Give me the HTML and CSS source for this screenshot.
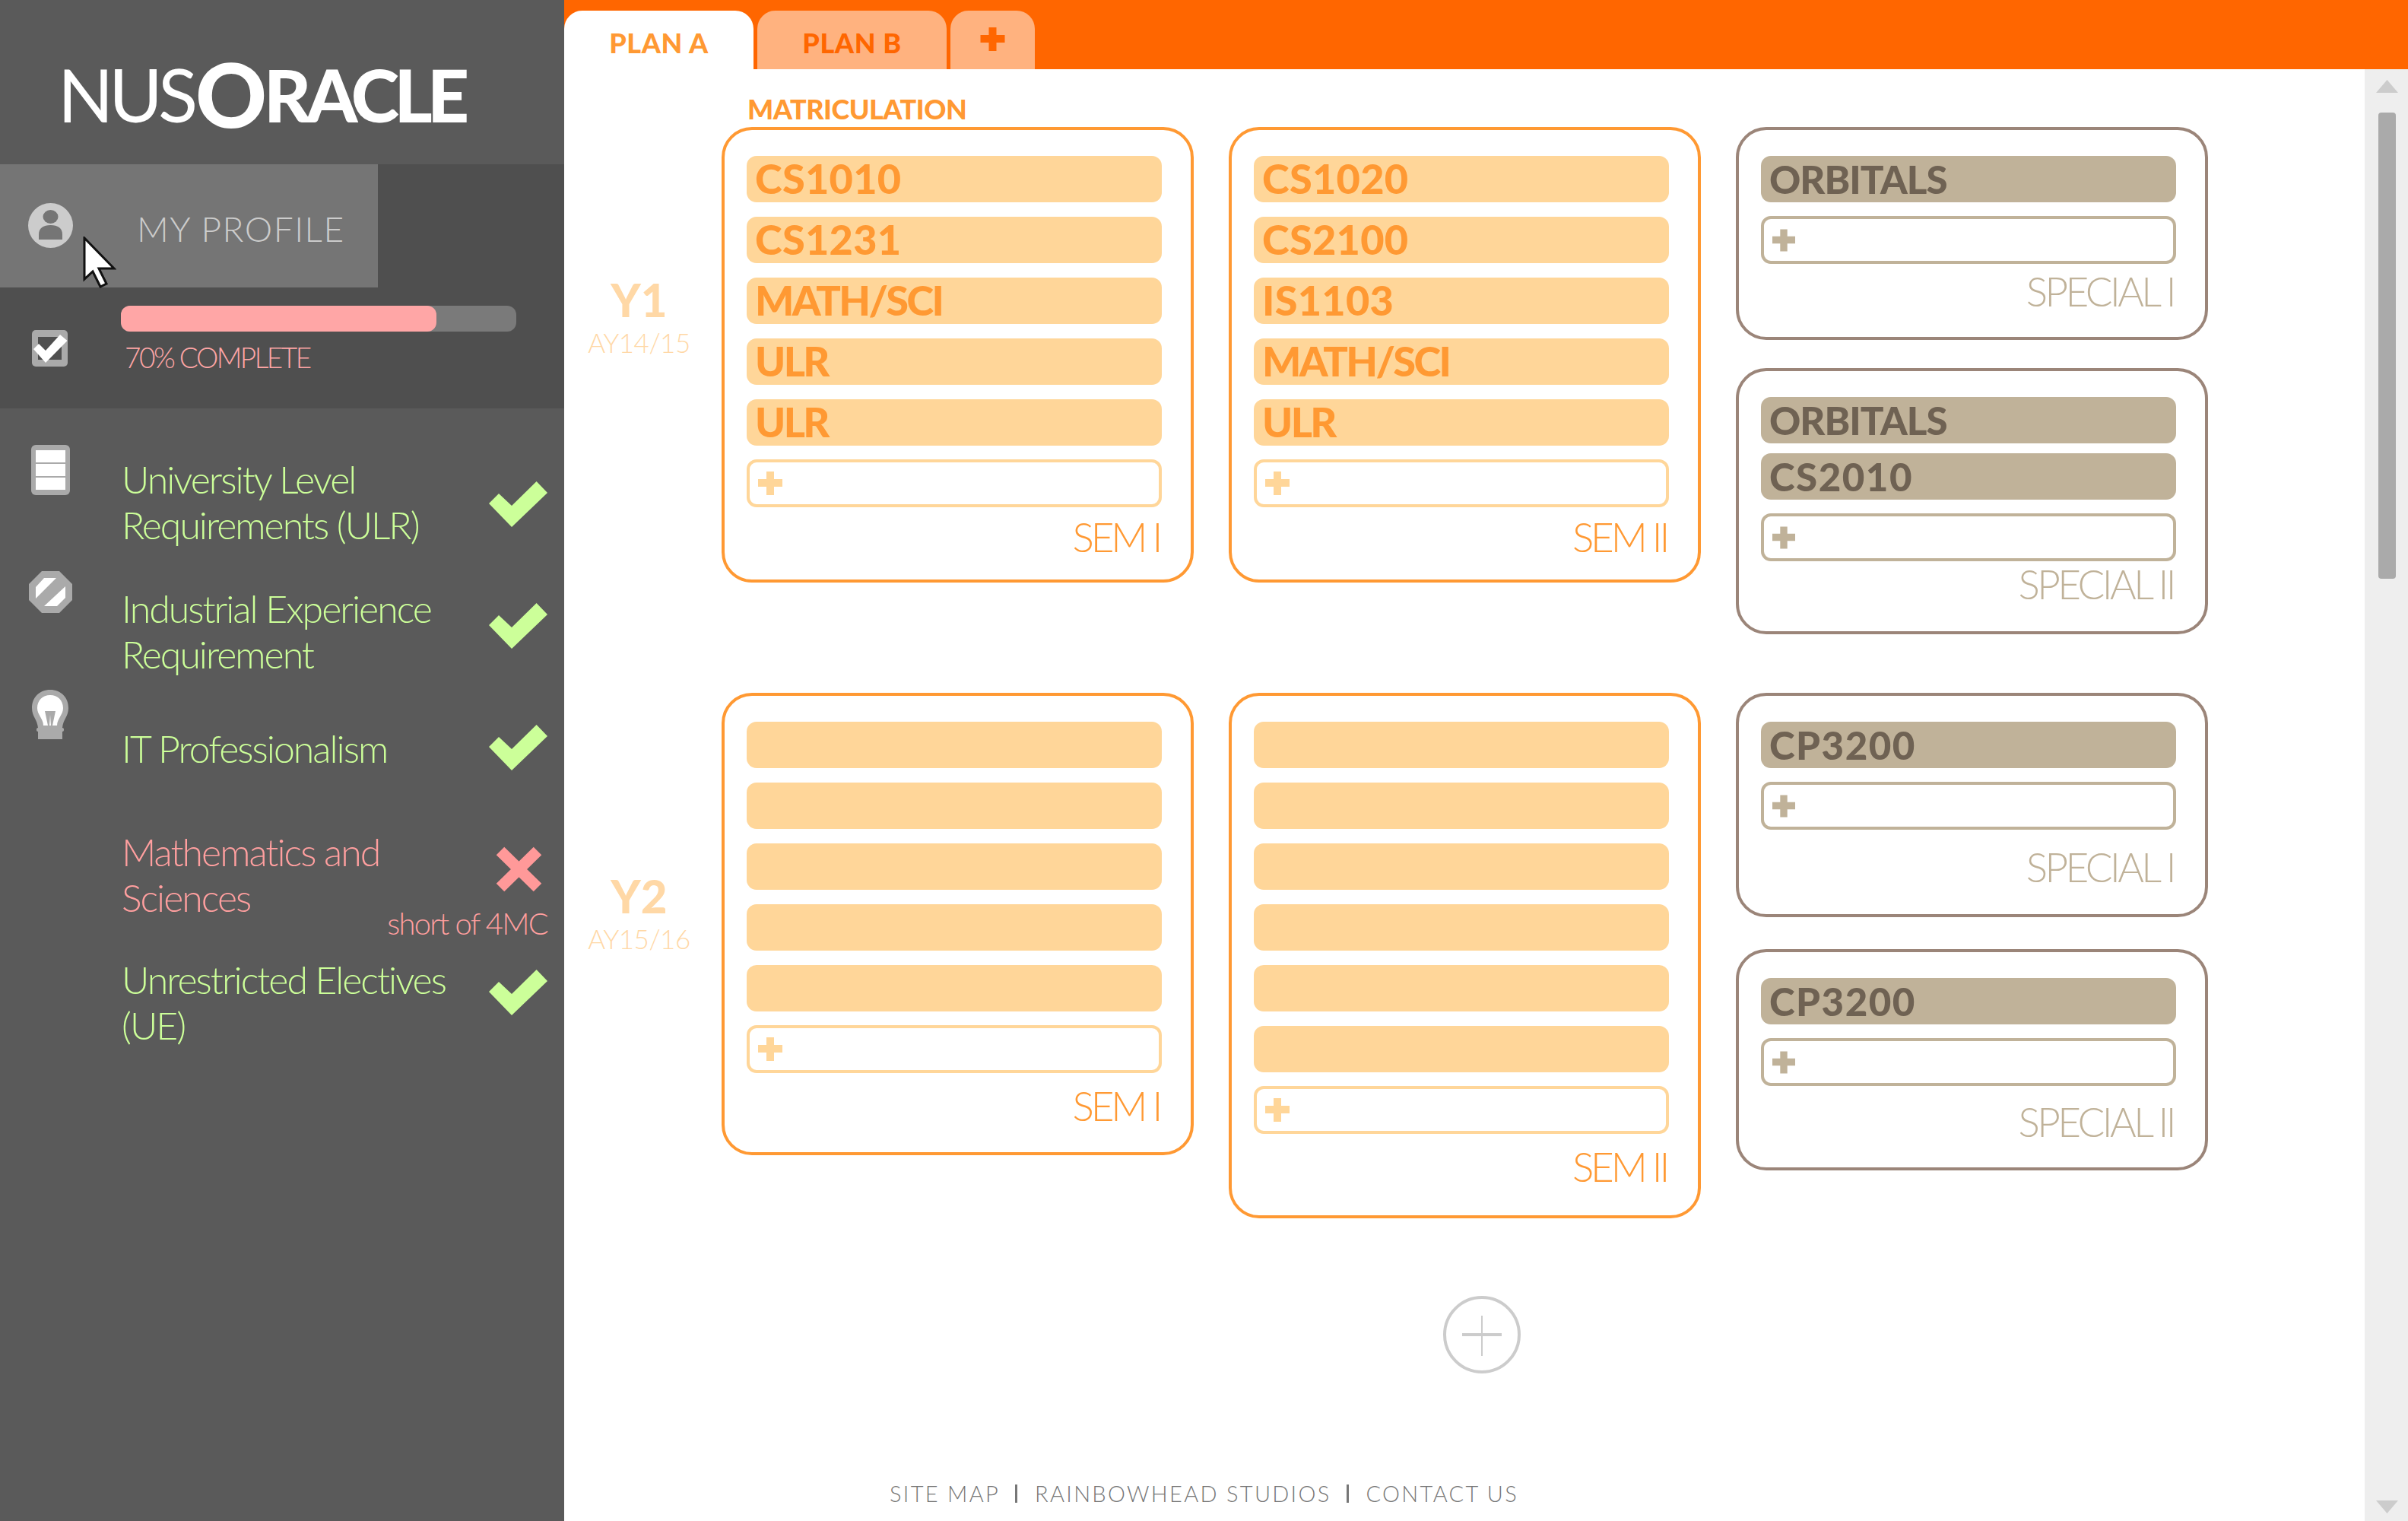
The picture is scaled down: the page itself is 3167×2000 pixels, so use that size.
FILE: index.html
```html
<!DOCTYPE html>
<html lang="en">
  <head>
    <meta charset="UTF-8" />
    <meta name="viewport" content="width=device-width, initial-scale=1.0" />
    <title>NUS Oracle</title>
    <link rel="stylesheet" href="styles.css">
  </head>
  <body>
    <svg class="defs" width="0" height="0">
      <defs>
        <path id="plus" d="M11 0H21V10H32V20H21V31H11V20H0V10H11Z" />
        <path id="tick" d="M0 30L30 61L77 16L62.6 1L30 33L13 17Z" />
      </defs>
    </svg>

    <aside class="sidebar">
      <div class="logo"><span class="logo-thin">NUS</span><span class="logo-o">O</span><span class="logo-bold">RACLE</span></div>

      <div class="account">
        <div class="profile">
          <svg class="icon-person" width="59" height="59" viewBox="0 0 59 59">
            <circle cx="29.5" cy="29.5" r="29.5" fill="#ccc" />
            <ellipse cx="29.5" cy="18" rx="10" ry="9" fill="#757575" />
            <path d="M14 48V41C14 33 20 29 29.5 29S45 33 45 41V48Z" fill="#757575" />
          </svg>
          <span class="profile-text">MY PROFILE</span>
          <svg class="cursor" width="44" height="68" viewBox="0 0 44 68">
            <path d="M2 2V56L13 46L23 66L31 62L21 42H41Z" fill="#fff" stroke="#111" stroke-width="3" />
          </svg>
        </div>
        <div class="progress-row">
          <svg class="icon-checkbox" width="47" height="48" viewBox="0 0 47 48">
            <rect width="47" height="48" rx="5" fill="#aaa" />
            <rect x="8" y="9" width="31" height="30" fill="#4f4f4f" />
            <path d="M2 25L18 43L46.5 14L37 6L18 27L9 18Z" fill="#fff" />
          </svg>
          <div class="progress-col">
            <div class="progress-track"><div class="progress-fill" style="width: 415px"></div></div>
            <div class="progress-text">70% COMPLETE</div>
          </div>
        </div>
      </div>

      <div class="reqs">
        <div class="req-icons">
          <svg class="icon-stack" width="51" height="66" viewBox="0 0 51 66">
            <rect width="51" height="66" rx="6" fill="#aaa" />
            <rect x="6" y="7" width="39" height="16" fill="#fff" />
            <rect x="6" y="25" width="39" height="16" fill="#fff" />
            <rect x="6" y="43" width="39" height="16" fill="#fff" />
          </svg>
          <svg class="icon-octagon" width="57" height="55" viewBox="0 0 57 55">
            <path d="M17 0H40L57 17V38L40 55H17L0 38V17Z" fill="#aaa" />
            <path d="M9 21L20 9H36L9 36Z" fill="#fff" />
            <path d="M48 20V35L37 46H20Z" fill="#fff" />
          </svg>
          <svg class="icon-bulb" width="48" height="65" viewBox="0 0 48 65">
            <path d="M24 0C38 0 48 10 48 24C48 35 41 39 40 50V65H8V50C7 39 0 35 0 24C0 10 10 0 24 0Z" fill="#aaa" />
            <path d="M24 7C34 7 41 14 41 24C41 33 33 38 33 47H15C15 38 7 33 7 24C7 14 14 7 24 7Z" fill="#fff" />
            <path d="M17 28H31L27 47H25L24 33L23 47H21Z" fill="#aaa" />
            <rect x="6" y="50" width="36" height="5" rx="2" fill="#aaa" />
          </svg>
        </div>
        <div class="req-list">
          <div class="req req-ok">
            <div class="req-name">University Level<br>Requirements (ULR)</div>
            <svg class="status" width="77" height="61" viewBox="0 0 77 61"><use href="#tick" /></svg>
          </div>
          <div class="req req-ok">
            <div class="req-name">Industrial Experience<br>Requirement</div>
            <svg class="status" width="77" height="61" viewBox="0 0 77 61"><use href="#tick" /></svg>
          </div>
          <div class="req req-ok">
            <div class="req-name">IT Professionalism</div>
            <svg class="status" width="77" height="61" viewBox="0 0 77 61"><use href="#tick" /></svg>
          </div>
          <div class="req req-bad">
            <div class="req-name">Mathematics and<br>Sciences</div>
            <svg class="status" width="61" height="62" viewBox="0 0 61 62">
              <path d="M6 7L55 55M55 7L6 55" stroke="#ff9999" stroke-width="15" fill="none" />
            </svg>
            <div class="req-short">short of 4MC</div>
          </div>
          <div class="req req-ok">
            <div class="req-name">Unrestricted Electives<br>(UE)</div>
            <svg class="status" width="77" height="61" viewBox="0 0 77 61"><use href="#tick" /></svg>
          </div>
        </div>
      </div>
    </aside>

    <div class="main">
      <nav class="tabs">
        <div class="tab tab-active">PLAN A</div>
        <div class="tab">PLAN B</div>
        <div class="tab tab-add">
          <svg width="33" height="31" viewBox="0 0 32 31" fill="#ff6600"><use href="#plus" /></svg>
        </div>
      </nav>

      <div class="body">
        <div class="content">
          <div class="matric">MATRICULATION</div>

          <section class="year year-one">
            <div class="year-label">
              <div class="year-name">Y1</div>
              <div class="year-ay">AY14/15</div>
            </div>
            <div class="card sem h-599">
              <div class="mods">
                <div class="mod">CS1010</div>
                <div class="mod">CS1231</div>
                <div class="mod mod-word">MATH/SCI</div>
                <div class="mod mod-word">ULR</div>
                <div class="mod mod-word">ULR</div>
              </div>
              <div class="add"><svg width="32" height="31" viewBox="0 0 32 31"><use href="#plus" /></svg></div>
              <div class="card-label">SEM I</div>
            </div>
            <div class="card sem h-599">
              <div class="mods">
                <div class="mod">CS1020</div>
                <div class="mod">CS2100</div>
                <div class="mod">IS1103</div>
                <div class="mod mod-word">MATH/SCI</div>
                <div class="mod mod-word">ULR</div>
              </div>
              <div class="add"><svg width="32" height="31" viewBox="0 0 32 31"><use href="#plus" /></svg></div>
              <div class="card-label">SEM II</div>
            </div>
            <div class="stack stack-one">
              <div class="card special h-280 label-14">
                <div class="mods"><div class="mod mod-word">ORBITALS</div></div>
                <div class="add"><svg width="30" height="30" viewBox="0 0 32 31"><use href="#plus" /></svg></div>
                <div class="card-label">SPECIAL I</div>
              </div>
              <div class="card special h-350 label-8">
                <div class="mods">
                  <div class="mod mod-word">ORBITALS</div>
                  <div class="mod">CS2010</div>
                </div>
                <div class="add"><svg width="30" height="30" viewBox="0 0 32 31"><use href="#plus" /></svg></div>
                <div class="card-label">SPECIAL II</div>
              </div>
            </div>
          </section>

          <section class="year year-two">
            <div class="year-label">
              <div class="year-name">Y2</div>
              <div class="year-ay">AY15/16</div>
            </div>
            <div class="card sem h-608 label-20">
              <div class="mods">
                <div class="mod"></div>
                <div class="mod"></div>
                <div class="mod"></div>
                <div class="mod"></div>
                <div class="mod"></div>
              </div>
              <div class="add"><svg width="32" height="31" viewBox="0 0 32 31"><use href="#plus" /></svg></div>
              <div class="card-label">SEM I</div>
            </div>
            <div class="card sem h-691 label-20">
              <div class="mods">
                <div class="mod"></div>
                <div class="mod"></div>
                <div class="mod"></div>
                <div class="mod"></div>
                <div class="mod"></div>
                <div class="mod"></div>
              </div>
              <div class="add"><svg width="32" height="31" viewBox="0 0 32 31"><use href="#plus" /></svg></div>
              <div class="card-label">SEM II</div>
            </div>
            <div class="stack stack-two">
              <div class="card special h-295 label-27">
                <div class="mods"><div class="mod">CP3200</div></div>
                <div class="add"><svg width="30" height="30" viewBox="0 0 32 31"><use href="#plus" /></svg></div>
                <div class="card-label">SPECIAL I</div>
              </div>
              <div class="card special h-291 label-25">
                <div class="mods"><div class="mod">CP3200</div></div>
                <div class="add"><svg width="30" height="30" viewBox="0 0 32 31"><use href="#plus" /></svg></div>
                <div class="card-label">SPECIAL II</div>
              </div>
            </div>
          </section>

          <div class="add-year">
            <span class="add-year-h"></span>
            <span class="add-year-v"></span>
          </div>

          <footer class="footer">
            <span>SITE MAP</span><i class="sep"></i><span>RAINBOWHEAD STUDIOS</span><i class="sep"></i><span>CONTACT US</span>
          </footer>
        </div>

        <div class="scrollbar">
          <svg class="scroll-up" width="29" height="17" viewBox="0 0 29 17"><path d="M14.5 0L29 17H0Z" /></svg>
          <div class="scroll-thumb"></div>
          <svg class="scroll-down" width="29" height="17" viewBox="0 0 29 17"><path d="M0 0H29L14.5 17Z" /></svg>
        </div>
      </div>
    </div>
  </body>
</html>
```

FILE: styles.css
```css
* {
  box-sizing: border-box;
}
html,
body {
  margin: 0;
  padding: 0;
  height: 2000px;
  overflow: hidden;
}
body {
  display: flex;
  font-family: Lato, "Open Sans", sans-serif;
  background-color: #fff;
}
.defs {
  position: absolute;
}

/* sidebar */
.sidebar {
  width: 742px;
  flex-shrink: 0;
  background-color: #5a5a5a;
}
.logo {
  height: 216px;
  padding: 32px 0 0 76px;
  display: flex;
  align-items: center;
  color: #fff;
  line-height: 1;
}
.logo-thin {
  font-size: 96px;
  font-weight: 400;
  letter-spacing: -6px;
}
.logo-o {
  font-size: 116px;
  font-weight: 900;
  margin-left: 3px;
}
.logo-bold {
  font-size: 96px;
  font-weight: 900;
  letter-spacing: -6.5px;
  margin-left: -4px;
}
.account {
  height: 321px;
  background-color: #4f4f4f;
}
.profile {
  position: relative;
  width: 497px;
  height: 162px;
  background-color: #757575;
  display: flex;
  padding: 51px 0 0 37px;
}
.profile-text {
  margin: 16px 0 0 84px;
  font-size: 46px;
  line-height: 36px;
  font-weight: 300;
  letter-spacing: 1.5px;
  color: #ccc;
}
.cursor {
  position: absolute;
  left: 109px;
  top: 95px;
}
.progress-row {
  display: flex;
  padding: 24px 0 0 42px;
}
.icon-checkbox {
  margin: 32px 70px 0 0;
}
.progress-track {
  width: 520px;
  height: 34px;
  border-radius: 12px;
  background-color: #7a7a7a;
}
.progress-fill {
  height: 34px;
  border-radius: 12px;
  background-color: #ffa6a6;
}
.progress-text {
  margin: 18px 0 0 5px;
  font-size: 37px;
  line-height: 32px;
  font-weight: 300;
  letter-spacing: -2.5px;
  color: #ffa6a6;
}
.reqs {
  display: flex;
}
.req-icons {
  width: 160px;
  padding: 48px 28px 0 0;
  display: flex;
  flex-direction: column;
  align-items: center;
}
.icon-octagon {
  margin-top: 100px;
}
.icon-bulb {
  margin-top: 101px;
}
.req-list {
  padding-top: 63px;
  width: 560px;
}
.req {
  display: flex;
  justify-content: space-between;
  align-items: center;
  flex-wrap: wrap;
}
.req-name {
  font-size: 50px;
  line-height: 60px;
  font-weight: 300;
  letter-spacing: -2px;
}
.req-ok .req-name {
  color: #ccff99;
}
.req-ok .status {
  fill: #ccff99;
}
.req-bad .req-name {
  color: #ff9f9f;
}
.req:nth-child(2) {
  margin-top: 50px;
}
.req:nth-child(3) {
  margin-top: 62px;
}
.req:nth-child(4) {
  margin-top: 75px;
}
.req:nth-child(5) {
  margin-top: 20px;
}
.req:nth-child(1) .status {
  margin-top: 4px;
}
.req:nth-child(2) .status {
  margin-bottom: 16px;
}
.req:nth-child(3) .status {
  margin-bottom: 2px;
}
.req:nth-child(4) .status {
  margin: 0 7px 14px 0;
}
.req:nth-child(5) .status {
  margin-bottom: 28px;
}
.req-short {
  width: 569px;
  margin-top: -20px;
  text-align: right;
  font-size: 40px;
  line-height: 48px;
  font-weight: 300;
  letter-spacing: -1.8px;
  color: #ff9f9f;
}

/* main area */
.main {
  flex: 1;
  min-width: 0;
}
.tabs {
  height: 91px;
  padding-top: 14px;
  display: flex;
  gap: 5px;
  background-color: #ff6600;
}
.tab {
  width: 249px;
  padding-top: 7px;
  border-radius: 24px 24px 0 0;
  background-color: #ffb27f;
  color: #ff6600;
  font-size: 36px;
  font-weight: 900;
  letter-spacing: 0.6px;
  display: flex;
  align-items: center;
  justify-content: center;
}
.tab-active {
  background-color: #fff;
  color: #ff9933;
}
.tab-add {
  width: 111px;
  padding: 0 0 2px;
}
.body {
  display: flex;
  height: 1909px;
}
.content {
  flex: 1;
  min-width: 0;
  display: flex;
  flex-direction: column;
}
.matric {
  height: 76px;
  padding: 37px 0 0 241px;
  font-size: 36px;
  line-height: 30px;
  font-weight: 900;
  letter-spacing: -0.5px;
  color: #ff9933;
}
.year {
  display: flex;
  align-items: flex-start;
  gap: 46px;
}
.year-one {
  height: 667px;
}
.year-two {
  margin-top: 77px;
  height: 691px;
}
.year-label {
  width: 207px;
  margin-right: -46px;
  text-align: center;
  padding-right: 10px;
  color: #ffd8a6;
}
.year-name {
  font-size: 60px;
  line-height: 44px;
  font-weight: 900;
}
.year-ay {
  margin-top: 20px;
  font-size: 35px;
  line-height: 28px;
  font-weight: 300;
  letter-spacing: -0.5px;
}
.year-one .year-label {
  padding-top: 205px;
}
.year-two .year-label {
  padding-top: 245px;
}
.card {
  width: 621px;
  border: 4px solid;
  border-radius: 40px;
  padding: 34px 38px 0 29px;
}
.h-599 { height: 599px; }
.h-608 { height: 608px; }
.h-691 { height: 691px; }
.h-280 { height: 280px; }
.h-350 { height: 350px; }
.h-295 { height: 295px; }
.h-291 { height: 291px; }
.sem {
  border-color: #ff9933;
  color: #ff9933;
}
.special {
  border-color: #9b8579;
  color: #c0b299;
}
.mods {
  display: flex;
  flex-direction: column;
}
.mod {
  height: 61px;
  border-radius: 13px;
  padding: 0 0 2px 11px;
  display: flex;
  align-items: center;
  font-size: 54px;
  line-height: 50px;
  font-weight: 900;
  letter-spacing: 0.3px;
}
.mod-word {
  letter-spacing: -2.6px;
}
.sem .mods {
  gap: 19px;
}
.sem .mod {
  background-color: #ffd699;
  color: #ff9933;
}
.special .mods {
  gap: 13px;
}
.special .mod {
  background-color: #c0b299;
  color: #6f6253;
  font-size: 51px;
  padding-bottom: 0;
  letter-spacing: 1.5px;
}
.special .mod-word {
  letter-spacing: -1px;
}
.add {
  height: 63px;
  margin-top: 18px;
  border: 4px solid;
  border-radius: 13px;
  padding-left: 11px;
  display: flex;
  align-items: center;
}
.sem .add {
  border-color: #ffd699;
  fill: #ffd699;
}
.special .add {
  border-color: #c0b299;
  fill: #c0b299;
}
.card-label {
  margin-top: 17px;
  padding-right: 3px;
  text-align: right;
  font-size: 53px;
  line-height: 44px;
  font-weight: 300;
  letter-spacing: -4.2px;
}
.special .card-label {
  letter-spacing: -3.6px;
}
.label-8 .card-label { margin-top: 8px; }
.label-14 .card-label { margin-top: 14px; }
.label-20 .card-label { margin-top: 21px; }
.label-25 .card-label { margin-top: 25px; }
.label-27 .card-label { margin-top: 27px; }
.stack {
  display: flex;
  flex-direction: column;
}
.stack-one {
  gap: 37px;
}
.stack-two {
  gap: 42px;
}
.add-year {
  position: relative;
  width: 102px;
  height: 102px;
  margin: 102px 0 0 1156px;
  border: 4px solid #ccc;
  border-radius: 50%;
  flex-shrink: 0;
}
.add-year-h {
  position: absolute;
  left: 21px;
  top: 45px;
  width: 52px;
  height: 4px;
  background-color: #ccc;
}
.add-year-v {
  position: absolute;
  left: 46px;
  top: 22px;
  width: 2px;
  height: 53px;
  background-color: #ccc;
}
.footer {
  margin: auto 0 21px 428px;
  display: flex;
  align-items: center;
  gap: 20px;
  font-size: 29px;
  line-height: 30px;
  font-weight: 300;
  letter-spacing: 2.3px;
  color: #777;
}
.sep {
  width: 3px;
  height: 24px;
  margin-right: 3px;
  background-color: #777;
}
.scrollbar {
  position: relative;
  width: 57px;
  flex-shrink: 0;
  background-color: #eee;
  padding: 14px 0 0 15px;
}
.scrollbar svg {
  display: block;
  fill: #ccc;
}
.scroll-thumb {
  width: 23px;
  height: 613px;
  margin: 26px 0 0 3px;
  border-radius: 4px;
  background-color: #aaa;
}
.scroll-down {
  position: absolute;
  left: 15px;
  bottom: 10px;
}
```
